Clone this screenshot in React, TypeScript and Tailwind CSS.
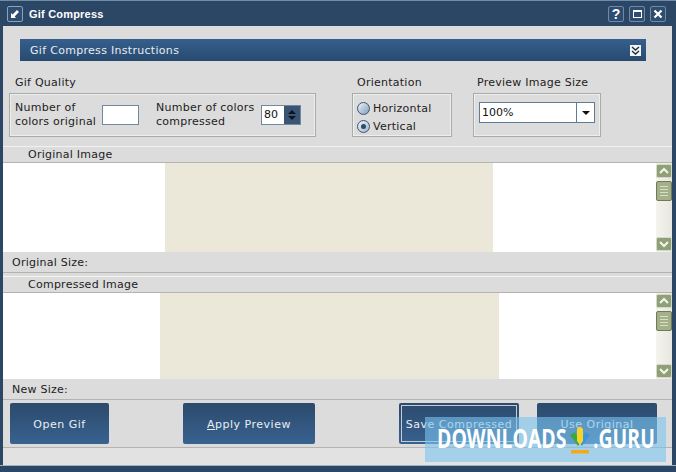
const font = "font-['DejaVu_Sans','Liberation_Sans',sans-serif]";

function TitleButton({ children }: { children: React.ReactNode }) {
  return (
    <div className="flex h-[16px] w-[16px] items-center justify-center rounded-[2px] border border-[#6f8aa6] bg-[#2f4d70]">
      {children}
    </div>
  );
}

function GroupLabel({ children, className }: { children: React.ReactNode; className?: string }) {
  return <div className={`text-[11px] leading-[14px] tracking-[0.25px] text-[#222] ${className ?? ""}`}>{children}</div>;
}

function ScrollBar() {
  return (
    <div className="flex w-[16px] flex-col bg-gradient-to-r from-[#f4f4ee] to-[#e8e8e0]">
      <div className="mt-[1px] flex h-[14px] items-center justify-center rounded-[2px] border border-[#d4dac6] bg-[#8f9f78]">
        <svg width="10" height="8" viewBox="0 0 10 8">
          <path d="M1 6 L5 2 L9 6" fill="none" stroke="#f4f6ea" strokeWidth="2" />
        </svg>
      </div>
      <div className="mt-[3px] flex h-[20px] flex-col items-center justify-center gap-[2px] rounded-[2px] border border-[#6f7a58] bg-[#a3b08a]">
        <div className="h-[1px] w-[8px] bg-[#d8e0c4]" />
        <div className="h-[1px] w-[8px] bg-[#d8e0c4]" />
        <div className="h-[1px] w-[8px] bg-[#d8e0c4]" />
        <div className="h-[1px] w-[8px] bg-[#d8e0c4]" />
      </div>
      <div className="flex-1" />
      <div className="mb-[1px] flex h-[14px] items-center justify-center rounded-[2px] border border-[#d4dac6] bg-[#8f9f78]">
        <svg width="10" height="8" viewBox="0 0 10 8">
          <path d="M1 2 L5 6 L9 2" fill="none" stroke="#f4f6ea" strokeWidth="2" />
        </svg>
      </div>
    </div>
  );
}

function ImagePanel({
  title,
  left,
  width,
  height
}: {
  title: string;
  left: string;
  width: string;
  height: string;
}) {
  return (
    <div>
      <div className="flex h-[17px] items-center border-y border-t-[#f2f2f2] border-b-[#b4b4ac] bg-[#dcdcdc] pt-[1px] pl-[25px] text-[11px] tracking-[0.25px] text-[#222]">
        {title}
      </div>
      <div className={`flex ${height} bg-white`}>
        <div className="flex-1">
          <div className={`${left} ${width} h-full bg-[#ece8d9]`} />
        </div>
        <ScrollBar />
      </div>
    </div>
  );
}

function ActionButton({
  children,
  className,
  focused
}: {
  children: React.ReactNode;
  className: string;
  focused?: boolean;
}) {
  return (
    <div
      className={`flex h-[41px] items-center justify-center rounded-[2px] bg-gradient-to-b from-[#2c4a6c] to-[#386290] text-[11px] tracking-[0.5px] text-[#e8eef4] ${className}`}
    >
      {focused ? (
        <div className="flex h-[37px] w-[calc(100%-4px)] items-center justify-center border border-[#c4ccd8] pt-[3px]">{children}</div>
      ) : (
        <div className="pt-[3px]">{children}</div>
      )}
    </div>
  );
}

export default function App() {
  return (
    <div className={`${font} relative flex h-[472px] w-[676px] flex-col overflow-hidden bg-[#2c4766]`}>
      <div className="flex h-[26px] items-center border-t border-t-[#6f8ca8] pr-[10px] pl-[7px]">
        <div className="flex h-[16px] w-[16px] items-center justify-center rounded-[2px] border border-[#8aa2ba] bg-[#2f4d70]">
          <svg width="10" height="10" viewBox="0 0 10 10">
            <path d="M1 4 L1 9 L6 9 L4.6 7.4 L9 3 L7 1 L2.6 5.4 Z" fill="#fff" />
          </svg>
        </div>
        <div className="ml-[6px] flex-1 pt-[1px] font-['Liberation_Sans',sans-serif] text-[11px] font-bold tracking-[0.2px] text-white">
          Gif Compress
        </div>
        <div className="flex gap-[5px]">
          <TitleButton>
            <span className="font-['Liberation_Sans',sans-serif] text-[14px] leading-none font-bold text-white">?</span>
          </TitleButton>
          <TitleButton>
            <div className="h-[8px] w-[9px] border border-t-2 border-white" />
          </TitleButton>
          <TitleButton>
            <svg width="10" height="10" viewBox="0 0 10 10">
              <path d="M1.5 1.5 L8.5 8.5 M8.5 1.5 L1.5 8.5" stroke="#fff" strokeWidth="2.2" />
            </svg>
          </TitleButton>
        </div>
      </div>

      <div className="mr-[4px] ml-[3px] flex flex-1 flex-col bg-[#dcdcdc]">
        <div className="mt-[13px] mr-[26px] ml-[17px] flex h-[22px] items-center justify-between bg-gradient-to-b from-[#365f8e] to-[#284a6e] pr-[5px] pl-[10px] text-[11px] tracking-[0.3px] text-[#e6ecf2]">
          <span className="pt-[2px]">Gif Compress Instructions</span>
          <div className="flex h-[11px] w-[11px] items-center justify-center bg-[#f2f4f6]">
            <svg width="9" height="9" viewBox="0 0 9 9">
              <path d="M1 1 L4.5 4 L8 1 M1 5 L4.5 8 L8 5" fill="none" stroke="#1c2c3c" strokeWidth="1.4" />
            </svg>
          </div>
        </div>

        <div className="mt-[15px] flex h-[68px] items-start">
          <div className="ml-[6px] w-[307px]">
            <GroupLabel className="mb-[3px] ml-[6px]">Gif Quality</GroupLabel>
            <div className="flex h-[44px] items-center border border-[#a8aca8] pl-[5px] shadow-[inset_0_0_0_1px_#eeeeee]">
              <GroupLabel className="w-[87px] leading-[13px]">
                Number of
                <br />
                colors original
              </GroupLabel>
              <div className="h-[20px] w-[37px] border border-[#6f8aa0] bg-white" />
              <GroupLabel className="ml-[17px] w-[105px] leading-[13px]">
                Number of colors
                <br />
                compressed
              </GroupLabel>
              <div className="flex h-[20px] w-[40px] items-center justify-between border border-[#6f8aa0] bg-white pl-[2px] text-[11px] text-[#111]">
                80
                <div className="flex h-[18px] w-[16px] flex-col items-center justify-center gap-[2px] bg-[#3a5474]">
                  <div className="h-0 w-0 border-x-[4px] border-b-[4px] border-x-transparent border-b-[#0c1420]" />
                  <div className="h-0 w-0 border-x-[4px] border-t-[4px] border-x-transparent border-t-[#0c1420]" />
                </div>
              </div>
            </div>
          </div>

          <div className="ml-[36px] w-[100px]">
            <GroupLabel className="mb-[3px] ml-[5px]">Orientation</GroupLabel>
            <div className="flex h-[44px] flex-col justify-center gap-[4px] border border-[#a8aca8] pt-[5px] pl-[4px] shadow-[inset_0_0_0_1px_#eeeeee]">
              <div className="flex items-center gap-[3px]">
                <div className="h-[13px] w-[13px] rounded-full border border-[#3a5474] bg-gradient-to-br from-[#f0f4f8] to-[#7f9cbc]" />
                <GroupLabel>Horizontal</GroupLabel>
              </div>
              <div className="flex items-center gap-[3px]">
                <div className="flex h-[13px] w-[13px] items-center justify-center rounded-full border border-[#3a5474] bg-gradient-to-br from-[#f0f4f8] to-[#9fb6cc]">
                  <div className="h-[5px] w-[5px] rounded-full bg-[#2c4a6c]" />
                </div>
                <GroupLabel>Vertical</GroupLabel>
              </div>
            </div>
          </div>

          <div className="ml-[21px] w-[128px]">
            <GroupLabel className="mb-[3px] ml-[4px]">Preview Image Size</GroupLabel>
            <div className="h-[44px] border border-[#a8aca8] pt-[8px] pl-[5px] shadow-[inset_0_0_0_1px_#eeeeee]">
              <div className="flex h-[21px] w-[116px] items-center border border-[#5f7c96] bg-white pl-[2px] text-[11px] text-[#111]">
                <span className="flex-1 pt-[1px]">100%</span>
                <div className="flex h-full w-[18px] items-center justify-center border-l border-l-[#5f7c96]">
                  <div className="h-0 w-0 border-x-[4px] border-t-[4px] border-x-transparent border-t-[#111]" />
                </div>
              </div>
            </div>
          </div>
        </div>

        <div className="mt-[2px]">
          <ImagePanel title="Original Image" left="ml-[162px]" width="w-[328px]" height="h-[89px]" />
        </div>
        <div className="flex h-[21px] items-center border-b border-b-[#b4b4ac] pt-[3px] pl-[9px] text-[11px] tracking-[0.25px] text-[#222]">
          Original Size:
        </div>
        <div className="mt-[3px]">
          <ImagePanel title="Compressed Image" left="ml-[157px]" width="w-[339px]" height="h-[86px]" />
        </div>
        <div className="flex h-[21px] items-center border-b border-b-[#b4b4ac] pt-[3px] pl-[9px] text-[11px] tracking-[0.25px] text-[#222]">
          New Size:
        </div>

        <div className="mt-[3px] flex pl-[7px]">
          <ActionButton className="w-[99px]">Open Gif</ActionButton>
          <ActionButton className="ml-[74px] w-[132px]">
            <span>
              <span className="underline">A</span>pply Preview
            </span>
          </ActionButton>
          <ActionButton className="ml-[84px] w-[120px]" focused>
            Save Compressed
          </ActionButton>
          <ActionButton className="ml-[18px] w-[120px]">Use Original</ActionButton>
        </div>

        <div className="mt-[3px] h-[18px] border-t border-t-[#b4b4ac] bg-[#e2e2e2]" />
      </div>
      <div className="h-[7px] border-t border-t-[#9fb2c4]" />

      {/* watermark sits over the bottom buttons */}
      <div className="absolute top-[417px] left-[425px] flex h-[45px] w-[241px] items-center bg-[#7cc4f0]/60 pl-[12px]">
        <div className="w-[130px] shrink-0">
          <span className="inline-block origin-left scale-x-[0.72] font-['Open_Sans',sans-serif] text-[27px] leading-none font-bold text-white">
            DOWNLOADS
          </span>
        </div>
        <svg className="ml-[3px] shrink-0" width="20" height="28" viewBox="0 0 20 28">
          <path d="M0 9 L5 6 L10 17 L8 20 Z" fill="#3fa648" />
          <path d="M20 9 L15 6 L10 17 L12 20 Z" fill="#3d94dc" />
          <path d="M7 3 Q10 -1 13 3 L13 15 L10 19 L7 15 Z" fill="#f6d428" />
          <rect x="1" y="24" width="18" height="3.5" fill="#f6a81c" />
        </svg>
        <div className="ml-[3px] w-[60px] shrink-0">
          <span className="inline-block origin-left scale-x-[0.72] font-['Open_Sans',sans-serif] text-[27px] leading-none font-bold text-white">
            .GURU
          </span>
        </div>
      </div>
    </div>
  );
}
